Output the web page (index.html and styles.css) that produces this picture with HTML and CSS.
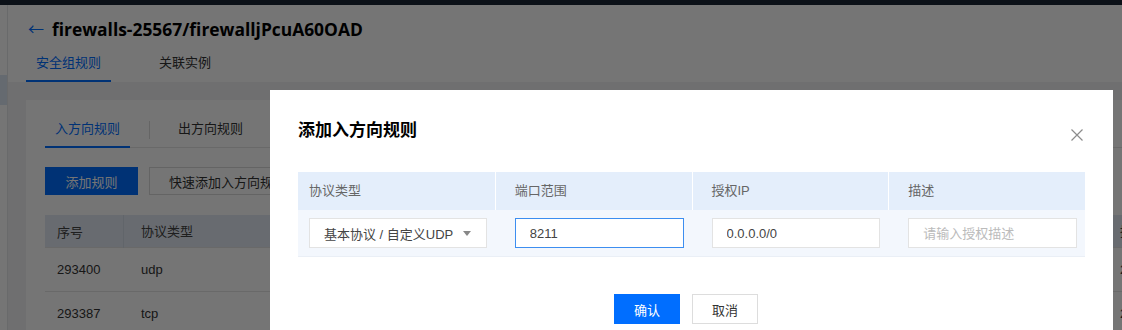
FILE: index.html
```html
<!DOCTYPE html>
<html lang="zh-CN">
<head>
    <meta charset="UTF-8">
    <meta name="viewport" content="width=device-width, initial-scale=1.0">
    <title>添加入方向规则</title>
    <link rel="stylesheet" href="styles.css">
</head>
<body>

    <!-- top nav -->
    <div class="topbar"></div>

    <div class="page">
        <aside class="side">
            <span class="side-mark"></span>
        </aside>

        <main class="main">
            <header class="head">
                <h1><span class="back">&larr;</span>firewalls-25567/firewalljPcuA60OAD</h1>
                <nav class="head-tabs">
                    <a class="active" href="#">安全组规则</a>
                    <a href="#">关联实例</a>
                </nav>
            </header>

            <section class="content">
                <div class="card">
                    <div class="rule-tabs">
                        <a class="active" href="#">入方向规则</a>
                        <span class="sep"></span>
                        <a href="#">出方向规则</a>
                    </div>

                    <div class="toolbar">
                        <button class="btn primary">添加规则</button>
                        <button class="btn">快速添加入方向规则</button>
                    </div>

                    <div class="list">
                        <div class="list-row list-head">
                            <span>序号</span><span>协议类型</span><span></span><span>描述</span>
                        </div>
                        <div class="list-row">
                            <span>293400</span><span>udp</span><span></span><span>2024-01-25</span>
                        </div>
                        <div class="list-row">
                            <span>293387</span><span>tcp</span><span></span><span>2024-01-25</span>
                        </div>
                    </div>
                </div>
            </section>
        </main>
    </div>

    <!-- dialog -->
    <div class="mask"></div>

    <div class="dialog">
        <div class="dialog-title">
            <h2>添加入方向规则</h2>
            <span class="close">
                <svg width="12" height="12" viewBox="0 0 12 12"><path d="M0.5 0.5 L11.5 11.5 M11.5 0.5 L0.5 11.5" stroke="#8c8c8c" stroke-width="1.2" fill="none"/></svg>
            </span>
        </div>

        <div class="rule-table">
            <div class="rt-row rt-head">
                <div class="rt-cell">协议类型</div>
                <div class="rt-cell">端口范围</div>
                <div class="rt-cell">授权IP</div>
                <div class="rt-cell">描述</div>
            </div>
            <div class="rt-row rt-body">
                <div class="rt-cell">
                    <div class="select">
                        <span>基本协议 / 自定义UDP</span>
                        <i class="caret"></i>
                    </div>
                </div>
                <div class="rt-cell">
                    <input class="field focus" type="text" value="8211">
                </div>
                <div class="rt-cell">
                    <input class="field" type="text" value="0.0.0.0/0">
                </div>
                <div class="rt-cell">
                    <input class="field" type="text" placeholder="请输入授权描述">
                </div>
            </div>
        </div>

        <div class="dialog-foot">
            <button class="btn ok">确认</button>
            <button class="btn cancel">取消</button>
        </div>
    </div>

</body>
</html>
```

FILE: styles.css
```css
* {
    padding: 0;
    margin: 0;
    box-sizing: border-box;
}

body {
    width: 1122px;
    height: 330px;
    overflow: hidden;
    position: relative;
    background-color: #f1f2f5;
    font-family: "Liberation Sans", "Noto Sans CJK SC", sans-serif;
    font-size: 13px;
    color: #333;
}

a {
    text-decoration: none;
    color: #333;
}

button {
    font-family: inherit;
    font-size: 13px;
    cursor: pointer;
}

.topbar {
    height: 5px;
    background-color: #1c2535;
}

.page {
    display: flex;
    height: 325px;
}

.side {
    width: 8px;
    flex-shrink: 0;
    background-color: #fff;
    border-right: 1px solid #e4e6ea;
    padding-top: 70px;
}

.side-mark {
    display: block;
    height: 30px;
    background-color: #dce6f3;
}

.main {
    flex: 1;
    overflow: hidden;
}

/* header */

.head {
    background-color: #fff;
    padding: 12px 0 0 18px;
}

.head h1 {
    display: flex;
    align-items: center;
    gap: 8px;
    font-family: "Open Sans", "Noto Sans CJK SC", sans-serif;
    font-size: 17.4px;
    font-weight: 700;
    line-height: 24px;
    color: #000;
    padding-left: 2px;
}

.back {
    font-size: 16px;
    font-weight: 400;
    color: #006eff;
}

.head-tabs {
    display: flex;
    margin-top: 5px;

    a {
        padding: 0 10px;
        line-height: 34px;
        border-bottom: 2px solid transparent;
        margin-right: 38px;
    }

    a.active {
        color: #006eff;
        border-bottom-color: #006eff;
    }
}

/* content */

.content {
    padding: 18px 0 0 18px;
}

.card {
    width: 1300px;
    height: 260px;
    background-color: #fff;
    padding: 12px 0 0 19px;
}

.rule-tabs {
    display: flex;
    align-items: center;
    border-bottom: 1px solid #e5e5e5;

    a {
        padding: 0 10px;
        line-height: 34px;
        border-bottom: 2px solid transparent;
        margin-bottom: -1px;
    }

    a.active {
        color: #006eff;
        border-bottom-color: #006eff;
    }

    .sep {
        width: 1px;
        height: 18px;
        background-color: #ddd;
        margin: 0 18px 0 19px;
    }
}

.toolbar {
    display: flex;
    gap: 11px;
    margin-top: 19px;

    .btn {
        height: 28px;
        padding: 0 19px;
        border: 1px solid #d9d9d9;
        background-color: #fff;
        color: #333;
    }

    .btn.primary {
        width: 93px;
        background-color: #006eff;
        border-color: #006eff;
        color: #fff;
    }
}

.list {
    margin-top: 20px;
}

.list-row {
    display: grid;
    grid-template-columns: 78px 500px 479px 200px;
    height: 44px;
    align-items: center;
    border-bottom: 1px solid #e5e5e5;

    span {
        padding-left: 12px;
    }
}

.list-head {
    height: 33px;
    background-color: #e3eaf4;
    color: #444;

    span + span {
        border-left: 1px solid #d4dce8;
        line-height: 33px;
        height: 33px;
        padding-left: 17px;
    }
}

.list-row:not(.list-head) span + span {
    padding-left: 18px;
}

/* dialog */

.mask {
    position: absolute;
    inset: 0;
    background-color: rgba(0, 0, 0, 0.54);
}

.dialog {
    position: absolute;
    left: 270px;
    top: 90px;
    width: 843px;
    height: 270px;
    background-color: #fff;
    padding: 29px 28px 0 28px;
}

.dialog-title {
    display: flex;
    justify-content: space-between;
    align-items: center;

    h2 {
        font-size: 17px;
        font-weight: 700;
        line-height: 24px;
        color: #000;
    }

    .close {
        display: flex;
        margin-right: 2px;
        margin-top: 8px;
    }
}

.rule-table {
    margin-top: 29px;
}

.rt-row {
    display: grid;
    grid-template-columns: repeat(4, 1fr);
}

.rt-head {
    height: 38px;
    background-color: #e4eefb;
    color: #666;

    .rt-cell {
        line-height: 38px;
        border-left: 1px solid #fff;
    }

    .rt-cell:first-child {
        border-left: none;
    }
}

.rt-body {
    background-color: #f3f7fd;
    border-bottom: 1px solid #eaeff6;
}

.rt-cell {
    padding: 8px 8px 8px 20px;
}

.rt-head .rt-cell {
    padding: 0 8px 0 19px;
}

.rt-cell:first-child,
.rt-head .rt-cell:first-child {
    padding-left: 11px;
}

.select {
    display: flex;
    justify-content: space-between;
    align-items: center;
    height: 30px;
    background-color: #fff;
    border: 1px solid #e3e3e3;
    padding: 0 15px 0 14px;
    color: #444;

    .caret {
        width: 0;
        height: 0;
        border-left: 4px solid transparent;
        border-right: 4px solid transparent;
        border-top: 5px solid #888;
    }
}

.field {
    display: block;
    width: 100%;
    height: 30px;
    border: 1px solid #e3e3e3;
    padding: 0 14px;
    font-family: inherit;
    font-size: 13px;
    color: #444;
    outline: none;
}

.field::placeholder {
    color: #bbb;
}

.field.focus {
    border-color: #3d8ef0;
}

.dialog-foot {
    display: flex;
    justify-content: center;
    gap: 12px;
    margin-top: 37px;
    padding-right: 11px;

    .btn {
        width: 66px;
        height: 30px;
        border: 1px solid #ddd;
        background-color: #fff;
        color: #333;
    }

    .btn.ok {
        background-color: #006eff;
        border-color: #006eff;
        color: #fff;
    }
}
```
